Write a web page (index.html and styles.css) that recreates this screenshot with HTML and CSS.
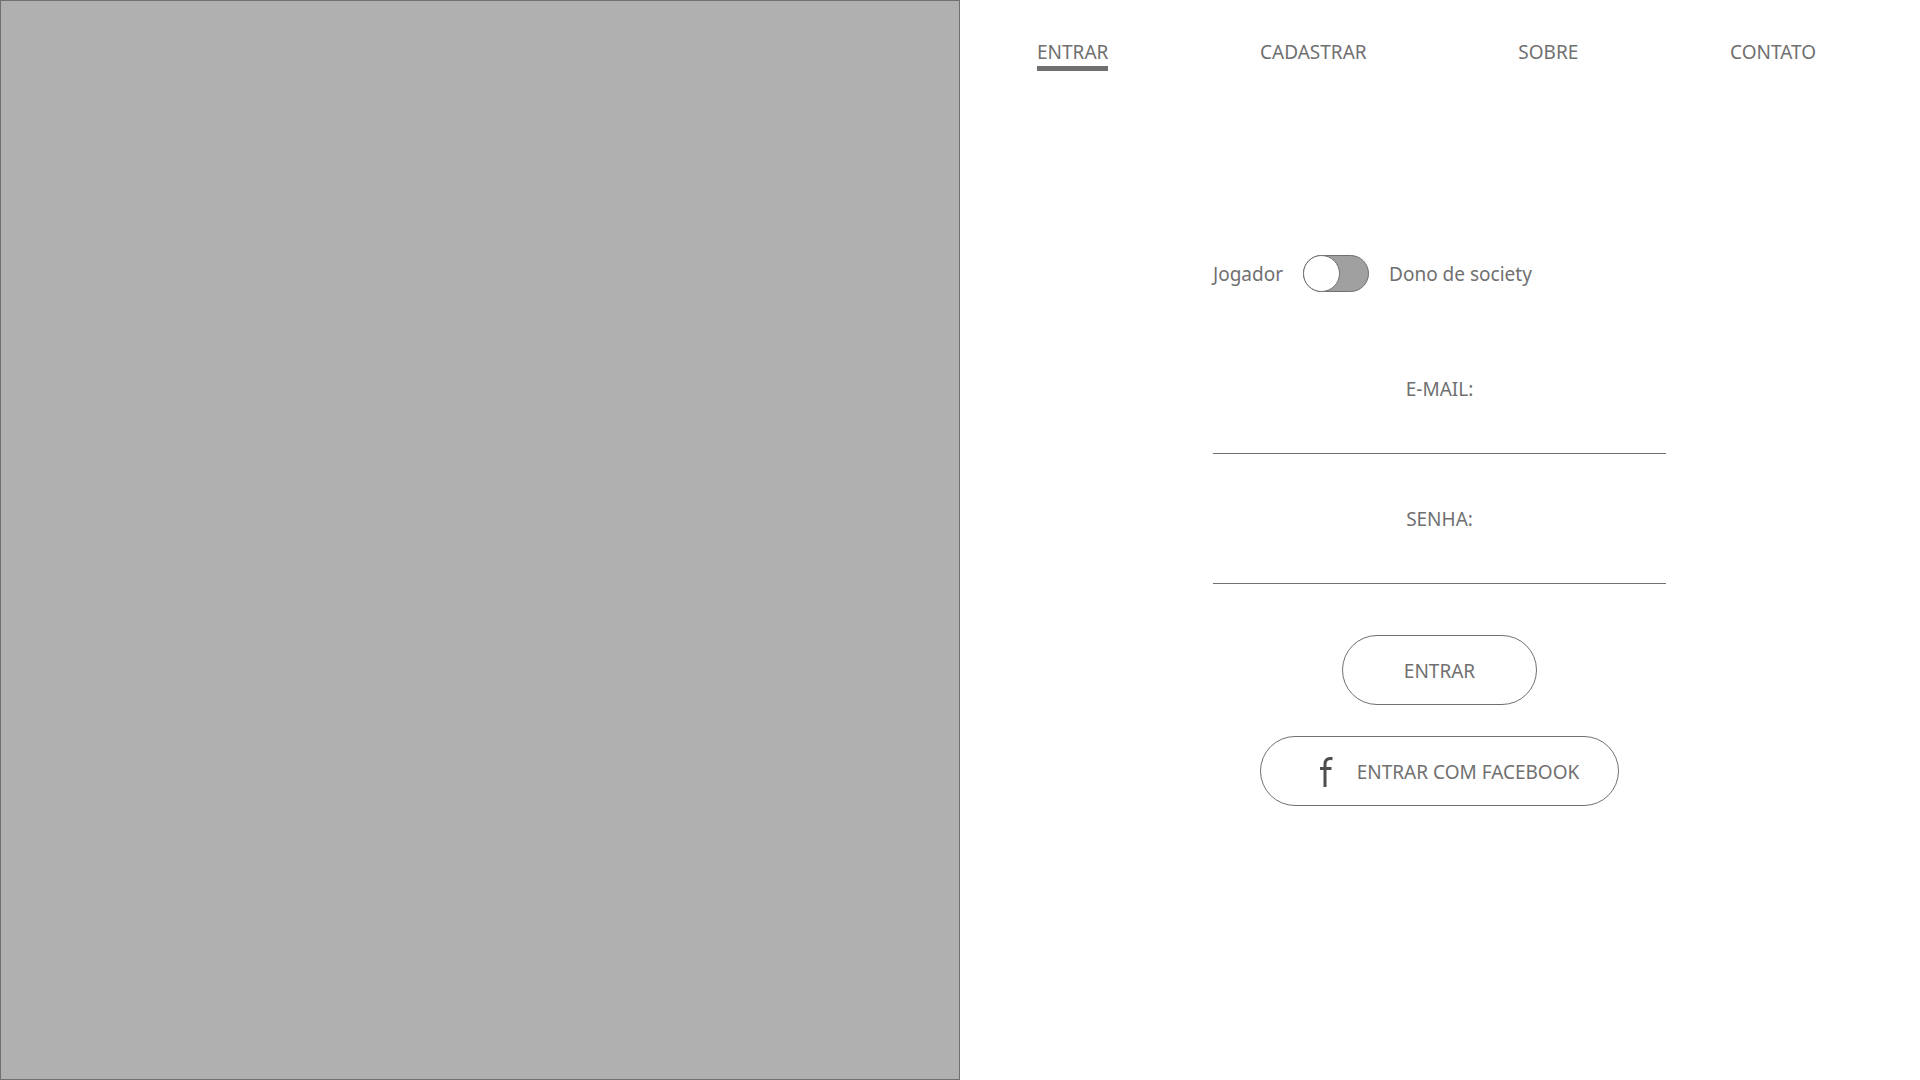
FILE: index.html
```html
<!DOCTYPE html>
<html lang="pt-BR">
<head>
<meta charset="utf-8">
<meta name="viewport" content="width=device-width, initial-scale=1">
<title>Entrar</title>
<link rel="stylesheet" href="styles.css">
</head>
<body>
<div class="page">
  <aside class="cover"></aside>
  <main class="panel">
    <nav class="menu">
      <a class="menu-link active" href="#entrar">ENTRAR</a>
      <a class="menu-link" href="#cadastrar">CADASTRAR</a>
      <a class="menu-link" href="#sobre">SOBRE</a>
      <a class="menu-link" href="#contato">CONTATO</a>
    </nav>
    <form class="login">
      <div class="profile">
        <label for="profile">Jogador</label>
        <input class="switch" id="profile" type="checkbox" role="switch">
        <label for="profile">Dono de society</label>
      </div>
      <div class="field">
        <label for="email">E-MAIL:</label>
        <input class="text-input" id="email" type="email">
      </div>
      <div class="field">
        <label for="password">SENHA:</label>
        <input class="text-input" id="password" type="password">
      </div>
      <div class="actions">
        <button class="button" type="submit">ENTRAR</button>
        <button class="button facebook" type="button">
          <svg class="icon" width="13" height="30" viewBox="0 0 13 30" aria-hidden="true">
            <path d="M12.5 1.7C7.500 .7 5 3 5 7.500V30M0 11.500H11.500" fill="none" stroke="#4d4d4d" stroke-width="3"/>
          </svg>
          ENTRAR COM FACEBOOK
        </button>
      </div>
    </form>
  </main>
</div>
</body>
</html>
```
FILE: styles.css
```css
*,
*::before {
  box-sizing: border-box;
}

body {
  margin: 0;
  background: #fff;
  color: #707070;
  font: 19px/27px "Noto Sans", "Open Sans", sans-serif;
}

.page {
  display: grid;
  grid-template-columns: 1fr 1fr;
  min-height: 100vh;
}

.cover {
  background: #b0b0b0;
  border: 1px solid #707070;
}

.panel {
  padding-right: 1px;
}

.menu {
  display: flex;
  justify-content: space-between;
  padding: 39px 103px 0 77px;
}

.menu-link {
  color: inherit;
  text-decoration: none;
  border-bottom: 5px solid transparent;
}

.menu-link.active {
  border-color: #707070;
}

.login {
  width: 100%;
  max-width: 453px;
  margin: 184px auto 0;
}

.profile {
  display: flex;
  align-items: center;
  gap: 20px;
  margin-bottom: 83px;
}

.profile label {
  padding-top: 2px;
}

.switch {
  appearance: none;
  display: flex;
  width: 66px;
  height: 37px;
  margin: 0;
  background: #a0a0a0;
  border: 1px solid #707070;
  border-radius: 20px;
}

.switch::before {
  content: "";
  width: 37px;
  height: 37px;
  margin: -1px;
  background: #fff;
  border: 1px solid #707070;
  border-radius: 50%;
}

.switch:checked {
  justify-content: flex-end;
}

.field {
  display: flex;
  flex-direction: column;
  margin-bottom: 51px;
  padding-top: 1px;
  text-align: center;
}

.text-input {
  width: 100%;
  height: 51px;
  padding: 0;
  background: none;
  border: 0;
  border-bottom: 1px solid #707070;
  color: inherit;
  font: inherit;
  text-align: center;
}

.actions {
  display: flex;
  flex-direction: column;
  align-items: center;
  gap: 31px;
}

.button {
  display: flex;
  align-items: center;
  justify-content: center;
  min-width: 195px;
  height: 70px;
  padding: 2px 38px 0;
  background: #fff;
  border: 1px solid #707070;
  border-radius: 35px;
  color: inherit;
  font: inherit;
}

.facebook {
  min-width: 359px;
  gap: 24px;
  padding-left: 58px;
}
```
